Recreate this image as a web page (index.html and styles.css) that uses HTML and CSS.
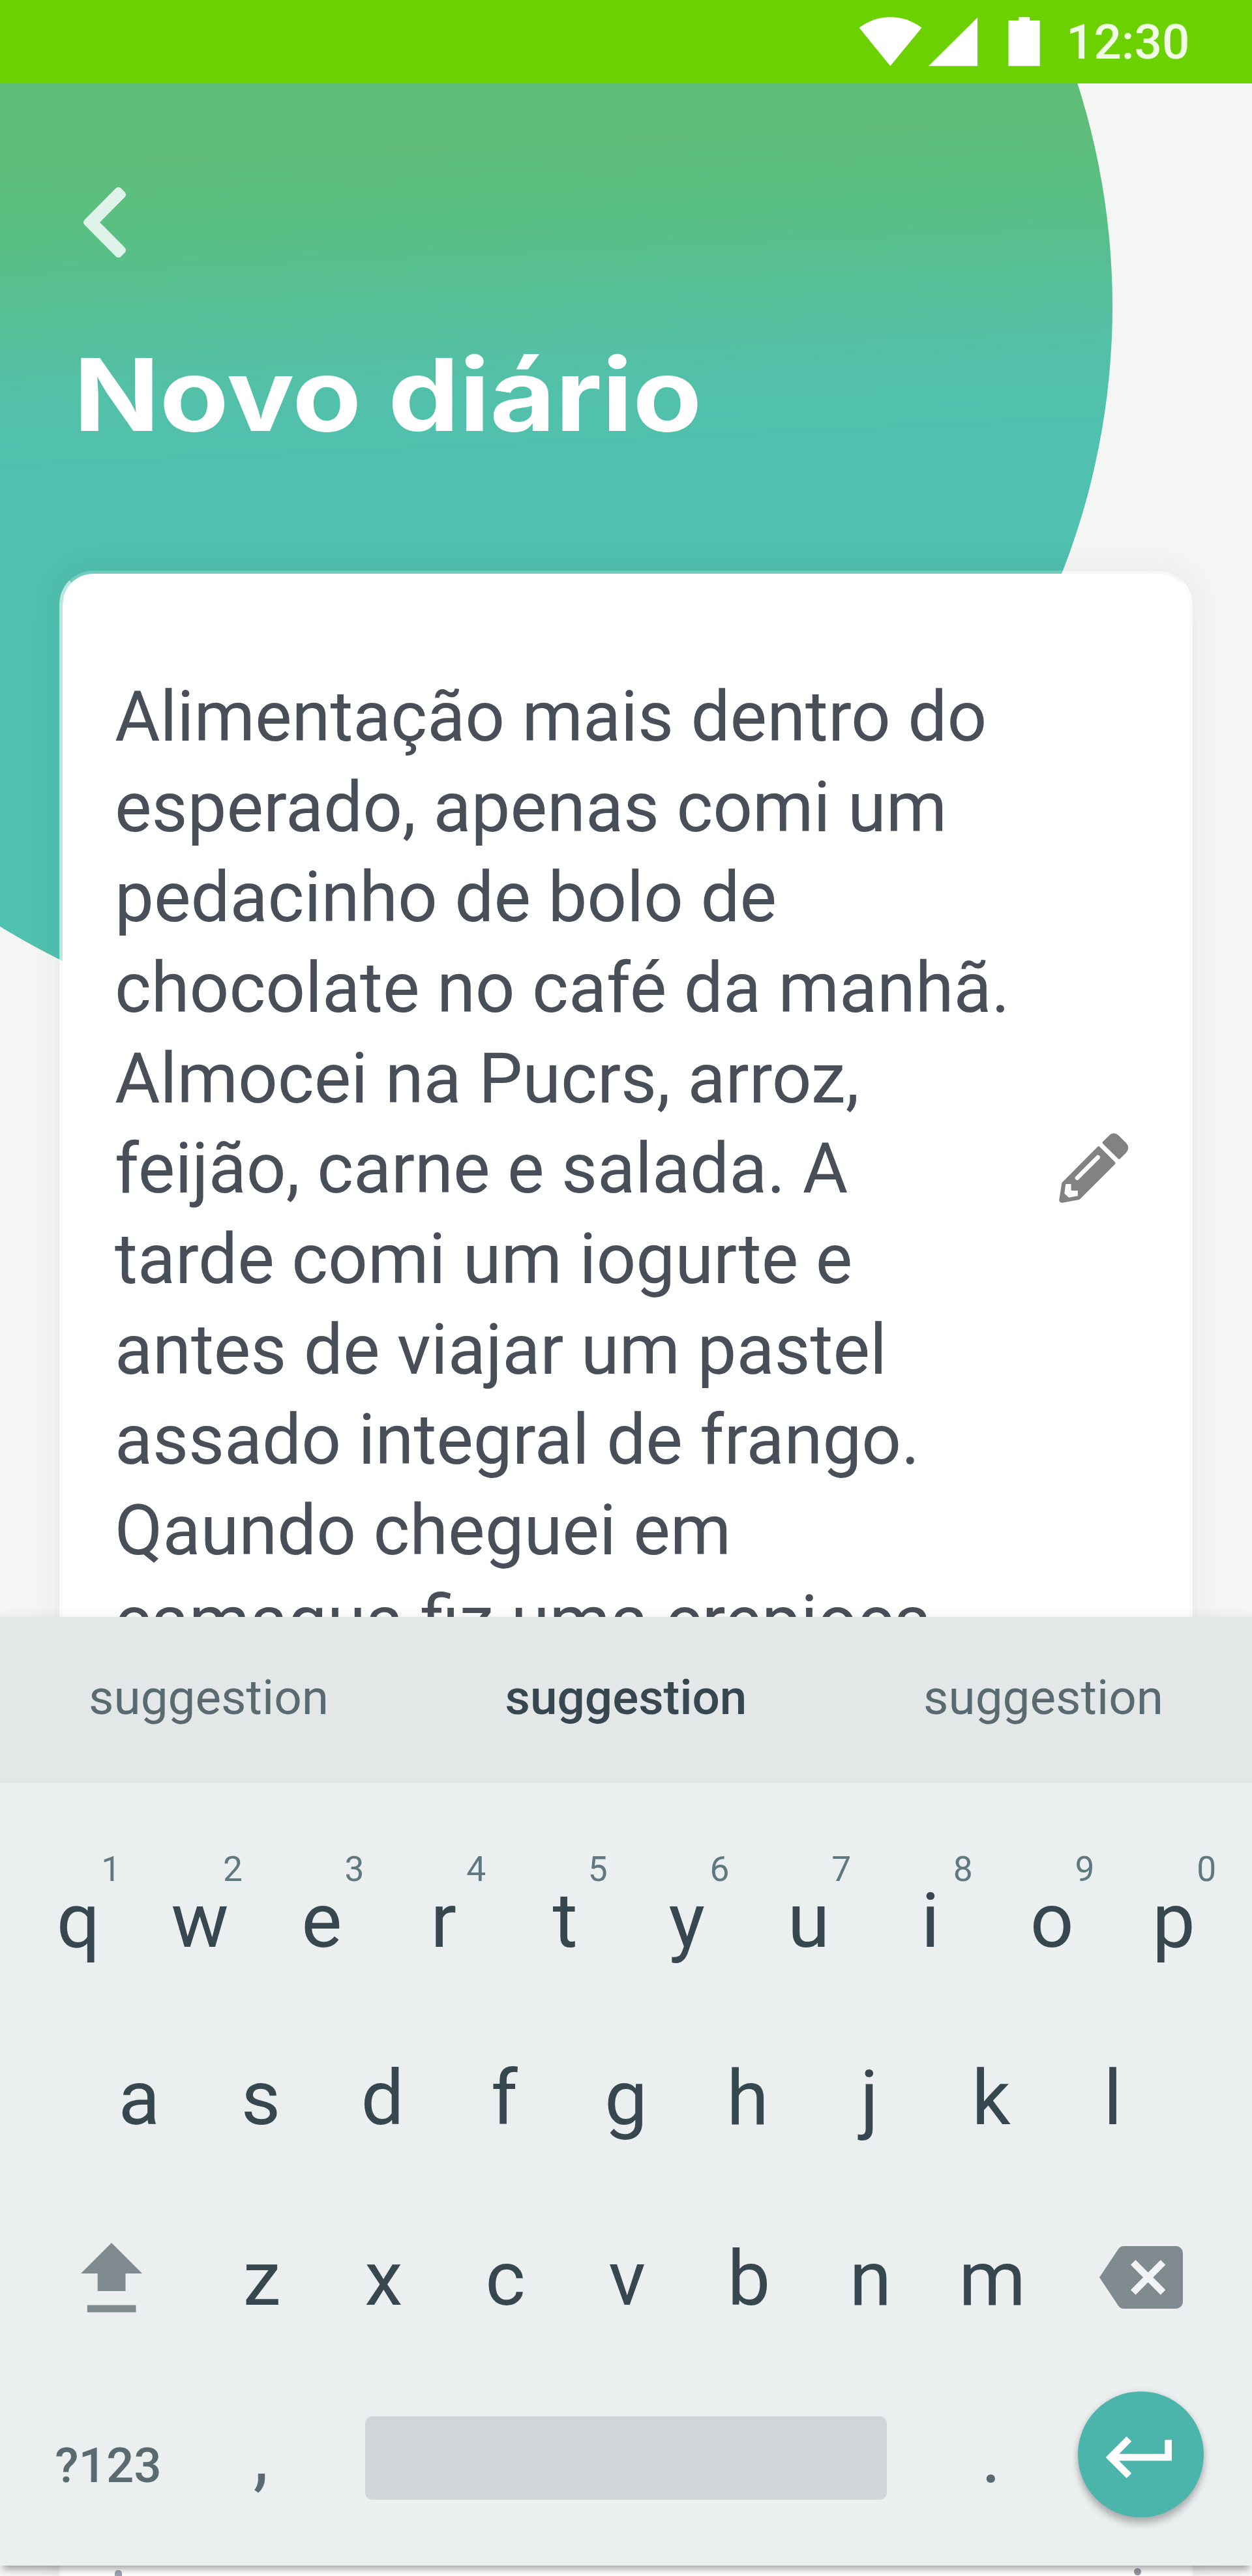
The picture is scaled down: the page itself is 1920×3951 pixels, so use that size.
FILE: index.html
```html
<!DOCTYPE html>
<html lang="pt-BR">
<head>
<meta charset="utf-8">
<title>Novo diário</title>
<link rel="stylesheet" href="styles.css">
</head>
<body>
<div class="screen">
  <header class="status">
    <svg class="status-icons" viewBox="1317 26 278 76" aria-hidden="true">
      <path d="M1317.600 42.500C1346 20.700 1385 20.700 1413.500 42.500L1365.300 101.300Z"/>
      <path d="M1499 27V101.300H1424Z"/>
      <path d="M1546.500 31.400H1562.400V26.200H1579.200V31.400H1594.700V101.300H1546.500Z"/>
    </svg>
    <span class="clock">12:30</span>
  </header>
  <main class="page">
    <div class="blob"></div>
    <nav class="nav">
      <svg class="back" viewBox="0 0 66 108" aria-label="Voltar"><path d="M53.500 5.500L59.500 11.500L17.500 54L59.500 96.500L53.500 102.500L5.500 54Z"/></svg>
    </nav>
    <h1 class="title">Novo diário</h1>
    <section class="card">
      <p class="entry">Alimentação mais dentro do<br>esperado, apenas comi um<br>pedacinho de bolo de<br>chocolate no café da manhã.<br>Almocei na Pucrs, arroz,<br>feijão, carne e salada. A<br>tarde comi um iogurte e<br>antes de viajar um pastel<br>assado integral de frango.<br>Qaundo cheguei em<br>camaqua fiz uma crepioca</p>
      <svg class="pencil" viewBox="372 264 322 322" aria-label="Editar">
        <path d="M574 304L600 278Q624 253 648 275L682 309Q702 332 682 354L654 382Q650 387 645 382L574 312Q571 308 574 304Z"/>
        <path fill-rule="evenodd" d="M550 327Q555 322 560 327L630 397Q635 402 630 408L470 567Q467 571 462 572L388 585Q371 585 373 570L385 494Q386 491 390 488ZM544 369L449 464A9.500 9.500 0 0 0 463 478L559 382A9.500 9.500 0 0 0 544 369ZM403 499L397 542L417 561L459 554V529H428V499Z"/>
      </svg>
    </section>
  </main>
  <section class="keyboard">
    <div class="suggestions"><span>suggestion</span><span class="strong">suggestion</span><span>suggestion</span></div>
    <div class="keys">
      <div class="row row-top"><span>q<sup>1</sup></span><span>w<sup>2</sup></span><span>e<sup>3</sup></span><span>r<sup>4</sup></span><span>t<sup>5</sup></span><span>y<sup>6</sup></span><span>u<sup>7</sup></span><span>i<sup>8</sup></span><span>o<sup>9</sup></span><span>p<sup>0</sup></span></div>
      <div class="row"><span>a</span><span>s</span><span>d</span><span>f</span><span>g</span><span>h</span><span>j</span><span>k</span><span>l</span></div>
      <div class="row row-mods">
        <svg class="shift" viewBox="0 0 94 107" aria-label="Shift"><path d="M47 0L94 47H68.500V74H25.700V47H0ZM9.800 95.500H84.500V106.500H9.800Z"/></svg>
        <div class="mid"><span>z</span><span>x</span><span>c</span><span>v</span><span>b</span><span>n</span><span>m</span></div>
        <svg class="backspace" viewBox="0 3 24 18" aria-label="Apagar"><path class="x-fill" d="M8 6h12v12H8z"/><path d="M22 3H7c-.69 0-1.230.35-1.590.88L0 12l5.410 8.110c.36.53.9.89 1.590.89h15c1.100 0 2-.9 2-2V5c0-1.100-.9-2-2-2zm-3 12.590L17.590 17 14 13.410 10.410 17 9 15.590 12.590 12 9 8.410 10.410 7 14 10.590 17.590 7 19 8.410 15.410 12 19 15.590z"/></svg>
      </div>
      <div class="row row-bottom">
        <span class="symbols">?123</span>
        <span class="punct">,</span>
        <div class="space"></div>
        <span class="punct">.</span>
        <div class="enter"><svg viewBox="0 0 24 24" aria-label="Enter"><path d="M19 7v4H5.830l3.580-3.590L8 6l-6 6 6 6 1.410-1.410L5.830 13H21V7z"/></svg></div>
      </div>
    </div>
  </section>
  <div class="peek"><i class="stem"></i><i class="dot"></i></div>
</div>
</body>
</html>
```
FILE: styles.css
```css
* { box-sizing: border-box; }
body { margin: 0; font-family: Roboto, sans-serif; }
.screen {
  position: relative;
  width: 1920px;
  height: 3951px;
  overflow: hidden;
  background: #f4f6f4;
  display: flex;
  flex-direction: column;
}
.status {
  height: 128px;
  flex: none;
  background: #6bd100;
  display: flex;
  align-items: flex-start;
  justify-content: flex-end;
  gap: 42px;
  padding: 26px 96px 0 0;
  position: relative;
  z-index: 1;
}
.status-icons { width: 278px; height: 76px; fill: #fff; margin-right: -3px; }
.clock {
  width: 189px;
  margin-left: 1px;
  font-size: 74.667px;
  font-weight: 500;
  line-height: 78px;
  color: rgba(255, 255, 255, .9);
}
.page { height: 2352px; flex: none; position: relative; }
.blob {
  position: absolute;
  left: -530px;
  top: -776px;
  width: 2236px;
  height: 2236px;
  border-radius: 50%;
  background: linear-gradient(177.500deg, #60bd78 39%, #5abf82 44%, #57bf94 49%, #53c0a8 55%, #50c0af 60%, #50c0af 100%);
}
.nav { position: relative; height: 267px; padding: 159px 0 0 128px; }
.back { display: block; width: 66px; height: 108px; fill: #dff3eb; stroke: #dff3eb; stroke-width: 11; stroke-linejoin: round; }
.title {
  position: relative;
  margin: 110px 0 0 112.500px;
  height: 242px;
  font: 700 154px/200px Inter, sans-serif;
  color: #fff;
  white-space: nowrap;
  transform: scaleX(1.123);
  transform-origin: 0 0;
}
.card {
  position: relative;
  margin: 128px 91px 0;
  height: 3200px;
  border-radius: 52px;
  border: 5px solid rgba(255, 255, 255, .6);
  border-top-color: rgba(255, 255, 255, .2);
  background: #fff padding-box;
  box-shadow: 0 0 48px rgba(30, 50, 40, .075);
  display: flex;
  align-items: flex-start;
  padding: 151px 75px 0 80px;
}
.entry {
  margin: 0;
  flex: 1;
  font-size: 106.667px;
  line-height: 138.667px;
  color: #484f58;
  white-space: nowrap;
}
.pencil { width: 107px; height: 107px; flex: none; fill: #828282; margin: 707px 18px 0 0; }
.keyboard {
  position: relative;
  z-index: 1;
  height: 1455px;
  flex: none;
  background: #ebeff0;
  box-shadow: 0 11px 10px -5px rgba(0, 0, 0, .3), 0 0 16px rgba(0, 0, 0, .08);
  color: #37474f;
}
.suggestions {
  height: 255px;
  background: #e3e7e8;
  display: grid;
  grid-template-columns: repeat(3, 1fr);
  text-align: center;
  font-size: 74.667px;
  line-height: 247px;
  color: #5a6a71;
}
.strong { font-weight: 500; color: #37474f; }
.keys { padding-top: 73px; display: flex; flex-direction: column; }
.row {
  height: 277.333px;
  flex: none;
  display: flex;
  justify-content: center;
  font-size: 117.333px;
  line-height: 277.333px;
  text-align: center;
}
.row-top { height: 272px; }
.row span { position: relative; width: 186.667px; }
sup {
  position: absolute;
  left: 91.500px;
  top: 27px;
  width: 104px;
  font-size: 53.333px;
  line-height: 64px;
  color: #607880;
}
.row-mods { height: 272px; justify-content: flex-start; padding: 0 106.400px 0 123.600px; }
.mid { display: flex; margin-left: 90.800px; }
.shift { width: 94px; height: 107px; margin-top: 82.500px; fill: #7f8b8f; }
.backspace { width: 128px; height: 96px; margin: 87.300px 0 0 auto; fill: #7f8b8f; }
.x-fill { fill: #f1f3f4; }
.row-bottom { justify-content: flex-start; color: #5a6a71; }
.row .symbols { width: 332px; font-size: 74.667px; font-weight: 500; line-height: 305.500px; }
.row .punct { width: 136px; }
.space { width: 800px; height: 128px; margin: 76.700px 92px 0; background: #d1d5d8; border-radius: 11px; }
.enter {
  width: 192.500px;
  height: 192.500px;
  margin: 39px 0 0 65px;
  padding: 37px 0 0 32px;
  border-radius: 50%;
  background: #4bb5ab;
  box-shadow: 0 10px 11px rgba(0, 0, 0, .24), 0 0 10px rgba(0, 0, 0, .1);
}
.enter svg { display: block; width: 128px; height: 128px; fill: #fff; }
.peek {
  position: relative;
  height: 16px;
  flex: none;
  display: flex;
  justify-content: space-between;
  align-items: flex-start;
  padding: 4px 170px 0 176px;
}
.dot { width: 11px; height: 11px; border-radius: 50%; background: #949ba6; }
.stem { width: 11px; height: 12px; margin-top: 3px; border-radius: 5px 5px 0 0; background: #9da3af; }
```
